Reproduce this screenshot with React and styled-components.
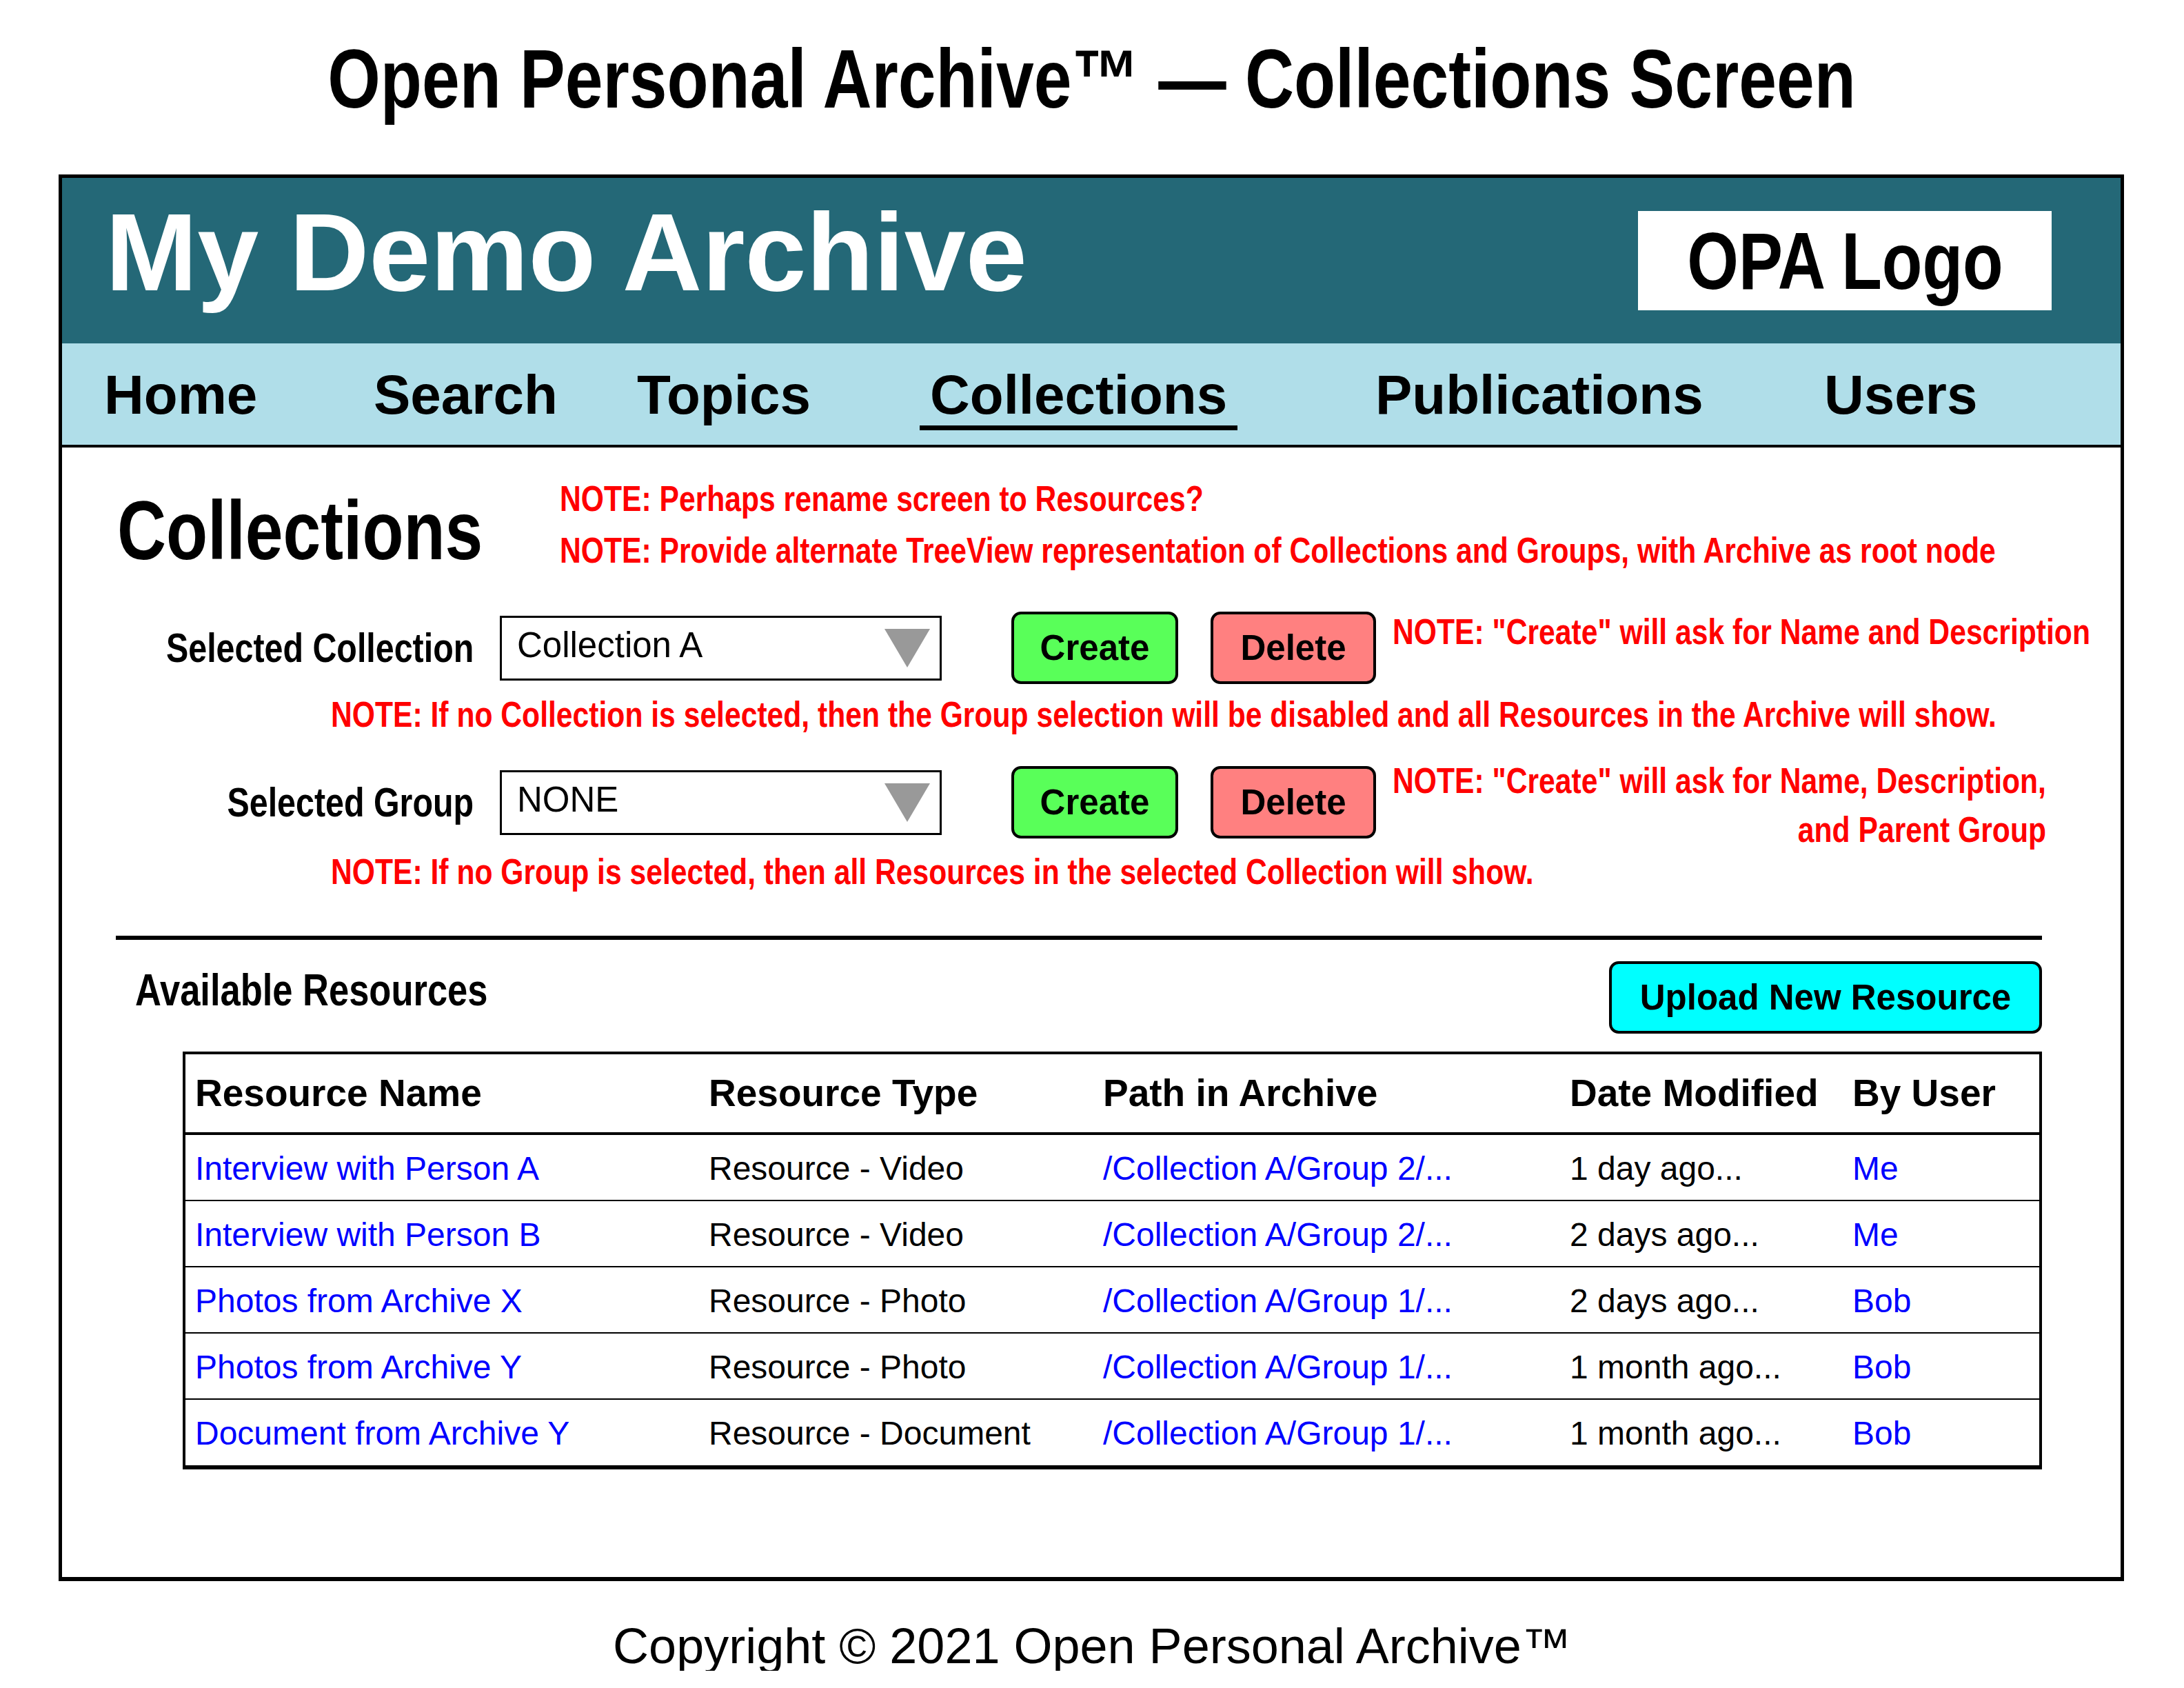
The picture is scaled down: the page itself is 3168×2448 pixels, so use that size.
import React from "react";
import styled, { createGlobalStyle } from "styled-components";

const sans = `"Liberation Sans", Arial, sans-serif`;

const GlobalStyle = createGlobalStyle`
  html, body { margin: 0; padding: 0; background: #ffffff; overflow: hidden; }
  body { width: 3168px; font-family: ${sans}; color: #000; }
`;

/* Arial Narrow look: Liberation Sans condensed horizontally */
const Narrow = styled.span`
  display: inline-block;
  white-space: nowrap;
  transform: scaleX(0.82);
  transform-origin: ${(p) => p.$origin || "left"} center;
`;

const Page = styled.div`
  width: 3168px;
`;

const PageTitle = styled.h1`
  margin: 0;
  box-sizing: border-box;
  height: 253px;
  padding-top: 54px;
  text-align: center;
  font: bold 120px/1 ${sans};
`;

const Frame = styled.div`
  margin-left: 85px;
  width: 2996px;
  box-sizing: border-box;
  border: 5px solid #000;
  border-bottom-width: 6px;
  overflow: hidden;
`;

const Banner = styled.header`
  height: 240px;
  background: #246877;
  display: flex;
  align-items: center;
  justify-content: space-between;
  padding: 0 100px 0 63px;
`;

const SiteTitle = styled.div`
  color: #fff;
  font: bold 160px/1 ${sans};
  padding-bottom: 24px;
`;

const Logo = styled.div`
  width: 600px;
  height: 144px;
  background: #fff;
  display: flex;
  align-items: center;
  justify-content: center;
  font: bold 117px/1 ${sans};
`;

const Nav = styled.nav`
  box-sizing: border-box;
  height: 151px;
  padding: 2px 0 0 61px;
  background: #b0dee9;
  border-bottom: 4px solid #000;
  display: grid;
  grid-template-columns: 391px 382px 425px 646px 651px 1fr;
  align-items: center;
`;

const NavItem = styled.div`
  justify-self: start;
  font: bold 80px/1 ${sans};
  ${(p) =>
    p.$active &&
    `
    padding: 11px 15px 4px;
    margin-left: -15px;
    border-bottom: 7px solid #000;
  `}
`;

const Content = styled.main`
  padding: 37px 0 156px;
`;

const TopRow = styled.div`
  display: grid;
  grid-template-columns: 642px 1fr;
  padding-left: 80px;
`;

const Heading = styled.h2`
  margin: 23px 0 0;
  font: bold 120px/1 ${sans};
`;

const Note = styled.p`
  margin: 0;
  color: #ff0000;
  font: bold 52px/${(p) => (p.$tight ? "71px" : "75px")} ${sans};
  white-space: nowrap;
`;

const SideNote = styled(Note)`
  align-self: start;
  justify-self: start;
  margin-top: ${(p) => (p.$tight ? "-14px" : "-8px")};
  text-align: right;
`;

const UnderNote = styled(Note)`
  margin-left: 390px;
  margin-top: ${(p) => p.$top}px;
`;

const FormRow = styled.div`
  display: grid;
  grid-template-columns: 635px 742px 289px 264px 1fr;
  grid-auto-rows: 105px;
  align-items: center;
  margin-top: ${(p) => p.$top}px;
`;

const Label = styled.label`
  text-align: right;
  padding-right: 38px;
  padding-top: 2px;
  font: bold 59px/1 ${sans};
  white-space: nowrap;
`;

const Select = styled.div`
  width: 641px;
  height: 94px;
  box-sizing: border-box;
  border: 3px solid #000;
  display: flex;
  align-items: center;
  justify-content: space-between;
  padding: 0 14px 0 22px;
`;

const SelectValue = styled.span`
  font: 51px/1 ${sans};
  padding-bottom: 8px;
`;

const Caret = styled.span`
  width: 0;
  height: 0;
  border-left: 33px solid transparent;
  border-right: 33px solid transparent;
  border-top: 56px solid #999999;
`;

const Button = styled.button`
  width: ${(p) => p.$w}px;
  height: 105px;
  box-sizing: border-box;
  border: 4px solid #000;
  border-radius: 14px;
  background: ${(p) => p.$bg};
  font: bold 51px/1 ${sans};
  color: #000;
  padding: 0;
  display: flex;
  align-items: center;
  justify-content: center;
`;

const Divider = styled.hr`
  margin: 55px 114px 0 78px;
  height: 6px;
  border: 0;
  background: #000;
`;

const ResourcesBar = styled.div`
  display: flex;
  justify-content: space-between;
  align-items: flex-start;
  margin: 31px 114px 0 106px;
`;

const SectionTitle = styled.h3`
  margin: 10px 0 0;
  font: bold 64px/1 ${sans};
`;

const Table = styled.table`
  margin: 26px 0 0 175px;
  width: 2697px;
  table-layout: fixed;
  border-collapse: separate;
  border-spacing: 0;
  border: 4px solid #000;
  border-bottom-width: 6px;
`;

const Th = styled.th`
  width: ${(p) => (p.$w ? `${p.$w}px` : "auto")};
  height: 117px;
  padding: 0 0 0 14px;
  box-sizing: border-box;
  text-align: left;
  vertical-align: middle;
  border-bottom: 4px solid #000;
  font: bold 55px/1 ${sans};
  white-space: nowrap;
`;

const Td = styled.td`
  height: ${(p) => (p.$last ? "95px" : "96px")};
  padding: 3px 0 0 14px;
  box-sizing: border-box;
  vertical-align: middle;
  border-bottom: ${(p) => (p.$last ? "0" : "2px solid #000")};
  font: 48px/1 ${sans};
  color: ${(p) => (p.$link ? "#0000ff" : "#000")};
  white-space: nowrap;
`;

const Footer = styled.footer`
  margin-top: 58px;
  text-align: center;
  font: 72px/1 ${sans};
`;

const navItems = ["Home", "Search", "Topics", "Collections", "Publications", "Users"];

const rows = [
  ["Interview with Person A", "Resource - Video", "/Collection A/Group 2/...", "1 day ago...", "Me"],
  ["Interview with Person B", "Resource - Video", "/Collection A/Group 2/...", "2 days ago...", "Me"],
  ["Photos from Archive X", "Resource - Photo", "/Collection A/Group 1/...", "2 days ago...", "Bob"],
  ["Photos from Archive Y", "Resource - Photo", "/Collection A/Group 1/...", "1 month ago...", "Bob"],
  ["Document from Archive Y", "Resource - Document", "/Collection A/Group 1/...", "1 month ago...", "Bob"],
];

const headers = [
  ["Resource Name", 745],
  ["Resource Type", 572],
  ["Path in Archive", 677],
  ["Date Modified", 410],
  ["By User", null],
];

const linkCols = [true, false, true, false, true];

export default function App() {
  return (
    <Page>
      <GlobalStyle />
      <PageTitle>
        <Narrow $origin="center">Open Personal Archive™ — Collections Screen</Narrow>
      </PageTitle>
      <Frame>
        <Banner>
          <SiteTitle>My Demo Archive</SiteTitle>
          <Logo>
            <Narrow $origin="center">OPA Logo</Narrow>
          </Logo>
        </Banner>
        <Nav>
          {navItems.map((n) => (
            <NavItem key={n} $active={n === "Collections"}>
              {n}
            </NavItem>
          ))}
        </Nav>
        <Content>
          <TopRow>
            <Heading>
              <Narrow>Collections</Narrow>
            </Heading>
            <div>
              <Note>
                <Narrow>NOTE: Perhaps rename screen to Resources?</Narrow>
              </Note>
              <Note>
                <Narrow>
                  NOTE: Provide alternate TreeView representation of Collections and Groups, with Archive as root node
                </Narrow>
              </Note>
            </div>
          </TopRow>

          <FormRow $top={51}>
            <Label>
              <Narrow $origin="right">Selected Collection</Narrow>
            </Label>
            <Select>
              <SelectValue>Collection A</SelectValue>
              <Caret />
            </Select>
            <Button $w={242} $bg="#59ff59">Create</Button>
            <Button $w={240} $bg="#ff8080">Delete</Button>
            <SideNote>
              <Narrow>NOTE: "Create" will ask for Name and Description</Narrow>
            </SideNote>
          </FormRow>
          <UnderNote $top={7}>
            <Narrow>
              NOTE: If no Collection is selected, then the Group selection will be disabled and all Resources in the Archive will show.
            </Narrow>
          </UnderNote>

          <FormRow $top={37}>
            <Label>
              <Narrow $origin="right">Selected Group</Narrow>
            </Label>
            <Select>
              <SelectValue>NONE</SelectValue>
              <Caret />
            </Select>
            <Button $w={242} $bg="#59ff59">Create</Button>
            <Button $w={240} $bg="#ff8080">Delete</Button>
            <SideNote $tight>
              <Narrow>
                NOTE: "Create" will ask for Name, Description,
                <br />
                and Parent Group
              </Narrow>
            </SideNote>
          </FormRow>
          <UnderNote $top={11}>
            <Narrow>
              NOTE: If no Group is selected, then all Resources in the selected Collection will show.
            </Narrow>
          </UnderNote>

          <Divider />

          <ResourcesBar>
            <SectionTitle>
              <Narrow>Available Resources</Narrow>
            </SectionTitle>
            <Button $w={628} $bg="#00ffff">Upload New Resource</Button>
          </ResourcesBar>

          <Table>
            <thead>
              <tr>
                {headers.map(([h, w]) => (
                  <Th key={h} $w={w}>
                    {h}
                  </Th>
                ))}
              </tr>
            </thead>
            <tbody>
              {rows.map((r, i) => (
                <tr key={i}>
                  {r.map((c, j) => (
                    <Td key={j} $link={linkCols[j]} $last={i === rows.length - 1}>
                      {c}
                    </Td>
                  ))}
                </tr>
              ))}
            </tbody>
          </Table>
        </Content>
      </Frame>
      <Footer>Copyright © 2021 Open Personal Archive™</Footer>
    </Page>
  );
}
